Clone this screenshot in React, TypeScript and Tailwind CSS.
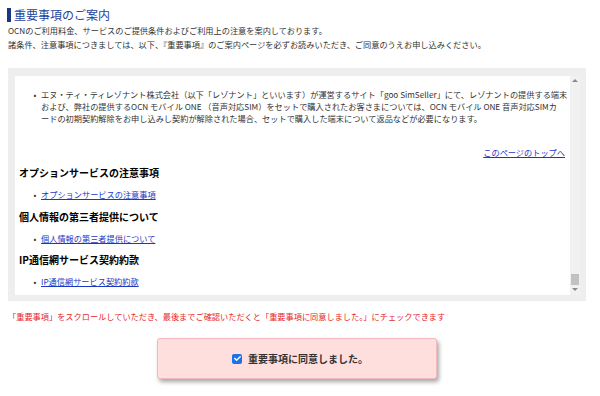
import { FaCheck } from 'react-icons/fa'

const jp = { fontFamily: '"Noto Sans CJK JP", "Noto Sans", sans-serif' }

function Bullet({ children }: { children: React.ReactNode }) {
    return (
        <div className="flex pl-[14px]">
            <span className="w-[12px] text-center text-[#333]">•</span>
            <div>{children}</div>
        </div>
    )
}

function Scrollbar() {
    return (
        <div className="w-[10px] bg-[#f1f1f1] flex flex-col items-center">
            <div className="mt-[3px] w-0 h-0 border-l-[3px] border-r-[3px] border-b-[3px] border-l-transparent border-r-transparent border-b-[#8a8a8a]" />
            <div className="flex-1" />
            <div className="w-[8px] h-[11px] bg-[#c1c1c1]" />
            <div className="mt-[3px] mb-[4px] w-0 h-0 border-l-[3px] border-r-[3px] border-t-[3px] border-l-transparent border-r-transparent border-t-[#8a8a8a]" />
        </div>
    )
}

export default function App() {
    return (
        <div className="w-[600px] h-[396px] bg-white overflow-hidden" style={jp}>

            {/* TITLE */}
            <div className="flex items-center h-[14px] mt-[8px] pl-[7px]">
                <div className="w-[4px] h-[14px] bg-[#1a3585]" />
                <h1 className="ml-[3px] text-[12px] leading-[14px] text-[#23449c]">重要事項のご案内</h1>
            </div>

            <p className="mt-[1px] pl-[8px] text-[8.2px] leading-[14px] text-[#333] whitespace-nowrap">
                OCNのご利用料金、サービスのご提供条件およびご利用上の注意を案内しております。<br />
                諸条件、注意事項につきましては、以下、『重要事項』のご案内ページを必ずお読みいただき、ご同意のうえお申し込みください。
            </p>

            {/* SCROLL BOX */}
            <div className="ml-[8px] mt-[17px] w-[578px] bg-[#eeeeee] pl-[7px] pt-[8px] pr-[6px] pb-[6px]">
                <div className="h-[219px] bg-white flex overflow-hidden">
                    <div className="flex-1 pt-[12px] text-[8.2px] text-[#333]">
                        <Bullet>
                            <p className="leading-[12px] whitespace-nowrap">
                                エヌ・ティ・ティレゾナント株式会社（以下「レゾナント」といいます）が運営するサイト「goo SimSeller」にて、レゾナントの提供する端末<br />
                                および、弊社の提供するOCN モバイル ONE （音声対応SIM）をセットで購入されたお客さまについては、OCN モバイル ONE 音声対応SIMカ<br />
                                ードの初期契約解除をお申し込みし契約が解除された場合、セットで購入した端末について返品などが必要になります。
                            </p>
                        </Bullet>

                        <div className="mt-[22px] pr-[5px] text-right leading-[12px]">
                            <a className="text-[#1b38c4] underline">このページのトップへ</a>
                        </div>

                        <h2 className="mt-[8px] pl-[4px] text-[10px] leading-[14px] font-bold text-black">オプションサービスの注意事項</h2>
                        <div className="mt-[8px] leading-[12px]">
                            <Bullet><a className="text-[#1b38c4] underline">オプションサービスの注意事項</a></Bullet>
                        </div>

                        <h2 className="mt-[10px] pl-[4px] text-[10px] leading-[14px] font-bold text-black">個人情報の第三者提供について</h2>
                        <div className="mt-[8px] leading-[12px]">
                            <Bullet><a className="text-[#1b38c4] underline">個人情報の第三者提供について</a></Bullet>
                        </div>

                        <h2 className="mt-[9px] pl-[4px] text-[10px] leading-[14px] font-bold text-black">IP通信網サービス契約約款</h2>
                        <div className="mt-[8px] leading-[12px]">
                            <Bullet><a className="text-[#1b38c4] underline">IP通信網サービス契約約款</a></Bullet>
                        </div>
                    </div>
                    <Scrollbar />
                </div>
            </div>

            <p className="mt-[9px] pl-[8px] text-[8.2px] leading-[12px] text-[#e8262b] whitespace-nowrap">
                「重要事項」をスクロールしていただき、最後までご確認いただくと「重要事項に同意しました。」にチェックできます
            </p>

            {/* AGREE BUTTON */}
            <div className="ml-[157px] mt-[16px] w-[280px] h-[41px] bg-[#ffdede] border border-[#f0baba] rounded-[3px] shadow-[2px_3px_4px_rgba(0,0,0,0.35)] flex items-center justify-center pl-[6px]">
                <label className="flex items-center gap-[6px]">
                    <span className="w-[10px] h-[10px] rounded-[2px] bg-[#1a73e8] flex items-center justify-center">
                        <FaCheck className="text-white w-[7px] h-[7px]" />
                    </span>
                    <span className="text-[10px] font-bold text-[#333] leading-[14px]">重要事項に同意しました。</span>
                </label>
            </div>
        </div>
    )
}
